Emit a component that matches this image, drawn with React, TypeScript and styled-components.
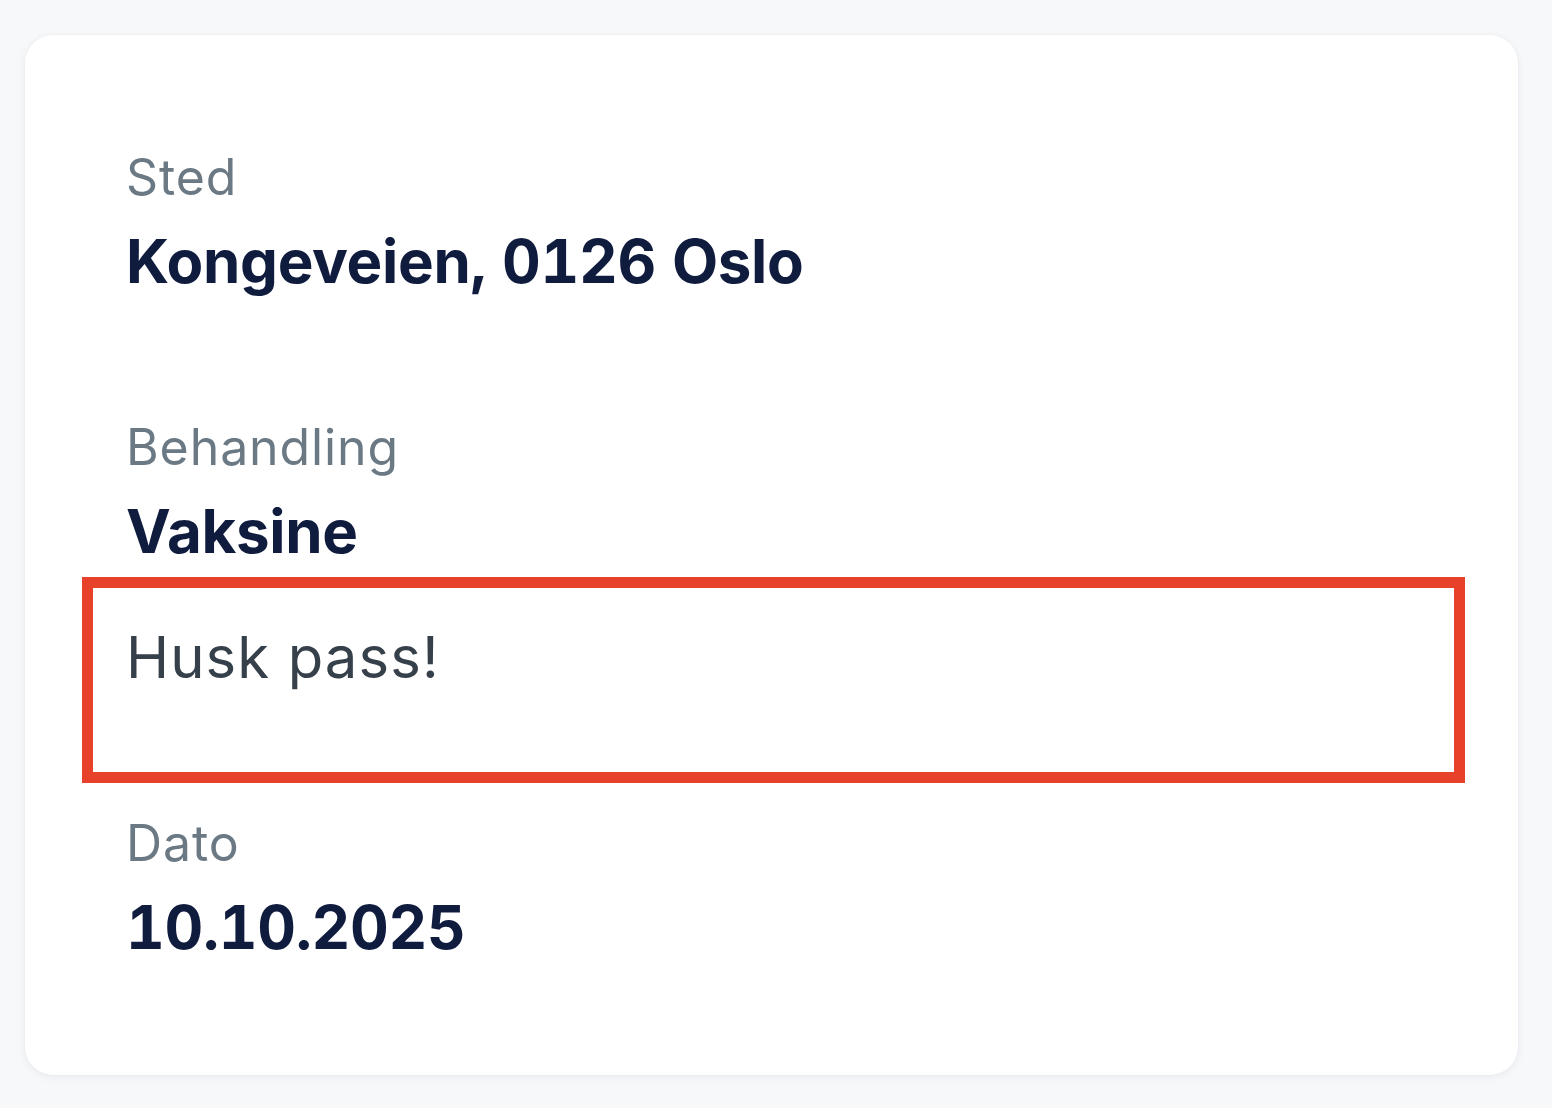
import React from "react";
import { styled, createGlobalStyle } from "styled-components";

const GlobalStyle = createGlobalStyle`
  html, body {
    margin: 0;
    padding: 0;
    background: #f7f8fa;
    font-family: Inter, "Noto Sans", "Liberation Sans", sans-serif;
  }
`;

const App = () => {
  return (
    <>
      <GlobalStyle />
      <Page>
        <Card>
          <Field>
            <Label>Sted</Label>
            <Value>Kongeveien, 0126 Oslo</Value>
          </Field>
          <Field $compact>
            <Label>Behandling</Label>
            <Value>Vaksine</Value>
          </Field>
          <Note>
            <p>Husk pass!</p>
          </Note>
          <Field>
            <Label>Dato</Label>
            <Value>10.10.2025</Value>
          </Field>
        </Card>
      </Page>
    </>
  );
};

export default App;

const Page = styled.div`
  min-height: 1108px;
  padding: 35px 34px 33px 25px;
  box-sizing: border-box;
`;

const Card = styled.div`
  width: 1493px;
  height: 1040px;
  box-sizing: border-box;
  background: #ffffff;
  border-radius: 28px;
  box-shadow: 0 2px 10px rgba(20, 30, 50, 0.06), 0 0 0 1px rgba(20, 30, 50, 0.02);
  padding: 112px 103px 112px 101px;
  display: flex;
  flex-direction: column;
`;

const Field = styled.div<{ $compact?: boolean }>`
  display: flex;
  flex-direction: column;
  gap: 16px;
  margin-bottom: ${(p) => (p.$compact ? "8px" : "118px")};
`;

const Label = styled.span`
  font-size: 50px;
  line-height: 60px;
  font-weight: 400;
  color: #6b7984;
  letter-spacing: 0.9px;
`;

const Value = styled.span`
  font-size: 60px;
  line-height: 76px;
  font-weight: 700;
  color: #101c3e;
  letter-spacing: -0.3px;
  font-variant-numeric: tabular-nums;
`;

const Note = styled.div`
  border: 11px solid #e8412a;
  margin: 0 -50px 30px -44px;
  padding: 33px 35px 79px 33px;
  p {
    margin: 0;
    font-size: 58px;
    line-height: 72px;
    color: #36404a;
    letter-spacing: 1.1px;
  }
`;
